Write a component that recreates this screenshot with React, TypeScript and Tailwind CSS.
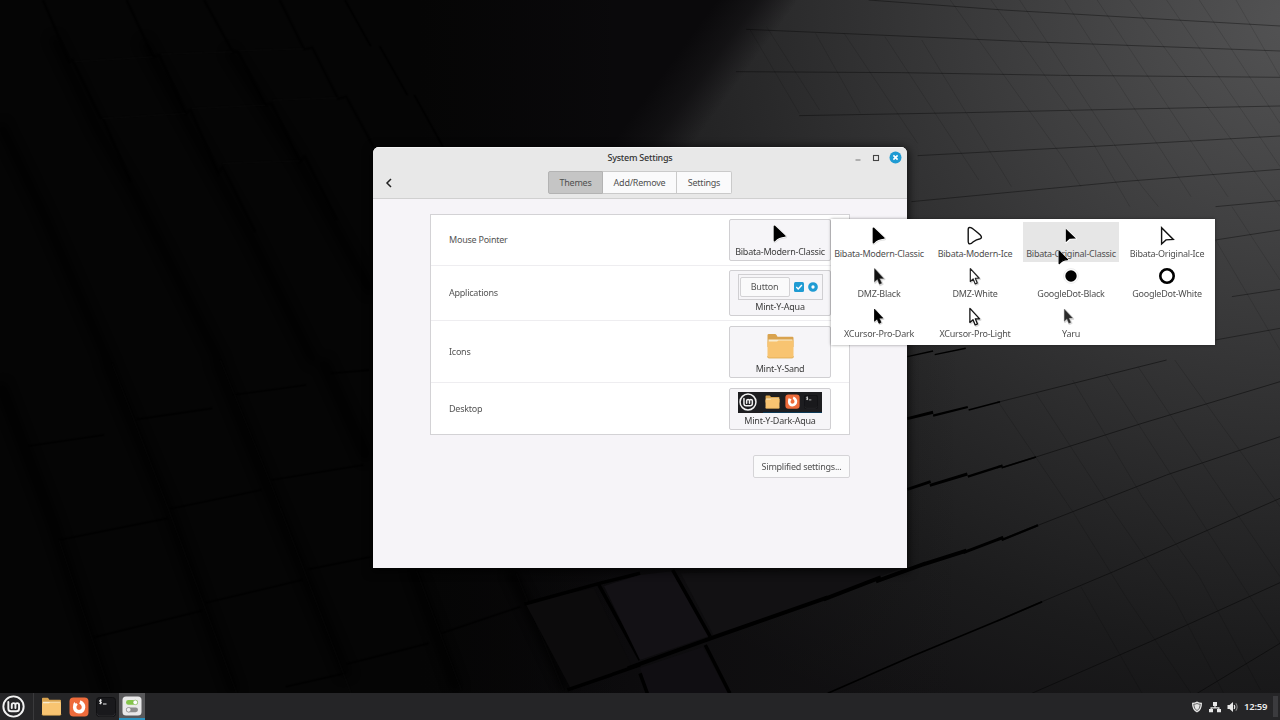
import type { ReactNode } from "react";

const ARROW = "M0 0 V12.2 L2.7 9.8 L4.6 14.4 L6.6 13.5 L4.7 9.1 H8.4 Z";

function MintLogo({ className }: { className: string }) {
  return (
    <svg className={className} viewBox="0 0 24 24" fill="none" stroke="#f2f2f2" strokeLinecap="round">
      <circle cx="12" cy="12" r="10.6" strokeWidth="2" />
      <path d="M6.6 7.2V14a3 3 0 0 0 3 3h5.2a3 3 0 0 0 3-3v-3.6a1.9 1.9 0 0 0-3.8 0v3.1M14 10.400a1.900 1.900 0 0 0-3.800 0v3.100" strokeWidth="2" />
    </svg>
  );
}

function Folder({ className }: { className: string }) {
  return (
    <svg className={className} viewBox="0 0 28 26">
      <path d="M1 2.200Q1 1 2.200 1H8.500Q9.400 1 10 2L11 3.800H25.800Q27 3.800 27 5V14H1Z" fill="#d9a34f" />
      <path d="M2 6.500H26V14H2Z" fill="#f8ecd0" />
      <path d="M1 8.500H10.500L12 7.500H27V23.500Q27 25 25.500 25H2.500Q1 25 1 23.500Z" fill="#f8c471" />
      <path d="M1 23.300Q1 25 2.500 25H25.500Q27 25 27 23.300" stroke="#dda94f" strokeWidth=".8" fill="none" />
    </svg>
  );
}

function Firefox({ className }: { className: string }) {
  return (
    <svg className={className} viewBox="0 0 20 20">
      <rect x=".5" y=".5" width="19" height="19" rx="4" fill="#ee6b3b" />
      <path d="M5.300 5.100 6.500 6.600 7.800 6.300 8.700 7.800 7.500 9.300Q7 12.800 10 12.900 13 12.700 12.700 9.500 12.300 7.300 10.300 6.700L11.400 3.200Q16.600 5.400 16.300 10.400 15.600 16.300 10 16.500 4.400 16.200 3.900 10.500 3.800 7.200 5.300 5.100Z" fill="#fff" />
    </svg>
  );
}

function Terminal({ className }: { className: string }) {
  return (
    <svg className={className} viewBox="0 0 20 20">
      <rect x=".5" y=".5" width="19" height="19" rx="3" fill="#19191c" stroke="#101012" />
      <path d="M1 16.500Q1.500 19 4 19H16Q18.500 19 19 16.500" fill="none" stroke="#303034" strokeWidth=".8" />
      <path d="M5.700 3.200Q3.300 2.700 3.400 4 3.700 5.100 5.500 5.200 5.900 6.900 3.300 6.400M4.600 2.200V7.300M7 7H10.500" fill="none" stroke="#eee" strokeWidth="1" />
    </svg>
  );
}

function SettingsApp({ className }: { className: string }) {
  return (
    <svg className={className} viewBox="0 0 20 20">
      <rect x=".5" y=".5" width="19" height="19" rx="3.500" fill="#e9e9e9" />
      <rect x="4" y="4" width="12" height="4.800" rx="2.400" fill="#84c54a" />
      <circle cx="13.300" cy="6.400" r="2.300" fill="#fff" stroke="#78ad4c" strokeWidth=".5" />
      <rect x="4" y="11.400" width="12" height="4.800" rx="2.400" fill="#8c8c8c" />
      <circle cx="6.600" cy="13.800" r="2.300" fill="#eee" stroke="#777" strokeWidth=".5" />
    </svg>
  );
}

function CursorBox({ children }: { children: ReactNode }) {
  return (
    <svg className="h-6 w-6 shrink-0 overflow-visible" viewBox="0 0 24 24" strokeLinejoin="round">
      {children}
    </svg>
  );
}

function ModernClassic() {
  return (
    <CursorBox>
      <path d="M6.800 4.800V19Q10.700 15 17.300 14.700Z" fill="#bbb" stroke="#bbb" strokeWidth="3.600" opacity=".45" />
      <path d="M6.500 4.300V18.600Q10.500 14.400 16.800 14Z" fill="#000" stroke="#fff" strokeWidth="3" />
      <path d="M6.500 4.300V18.600Q10.500 14.400 16.800 14Z" fill="#000" stroke="#000" strokeWidth="1.700" />
    </CursorBox>
  );
}

function Shadowed({ d, x, y, s, fill, stroke, line = 1.2 }: { d: string; x: number; y: number; s: number; fill: string; stroke: string; line?: number }) {
  return (
    <CursorBox>
      <g transform={`translate(${x} ${y}) scale(${s})`}>
        <path d={d} transform="translate(.7 .8)" fill="#999" stroke="#999" strokeWidth="2" opacity=".35" />
        <path d={d} fill={fill} stroke={stroke} strokeWidth={line} />
      </g>
    </CursorBox>
  );
}

const pointers: { name: string; icon: ReactNode; hover?: boolean }[] = [
  { name: "Bibata-Modern-Classic", icon: <ModernClassic /> },
  {
    name: "Bibata-Modern-Ice",
    icon: (
      <CursorBox>
        <path d="M5.200 5.300Q5.400 2.900 7.800 3.600 10.200 4.600 17.300 11 19.600 13.500 17.300 14.700 13.300 15.300 10.300 17.800 7.300 20.800 5.700 19.400 5 18.700 5.200 16Z" fill="#fff" stroke="#111" strokeWidth="1.400" />
      </CursorBox>
    ),
  },
  {
    name: "Bibata-Original-Classic",
    hover: true,
    icon: (
      <CursorBox>
        <path d="M7 5.300V18.500L10.800 15 17 14.700Z" fill="#000" stroke="#fff" strokeWidth="1.700" />
        <path d="M6.800 4.800V18.200L10.600 14.800 17 14.500Z" fill="#000" />
      </CursorBox>
    ),
  },
  {
    name: "Bibata-Original-Ice",
    icon: (
      <CursorBox>
        <path d="M6.600 3.800V20L11 15.900 18.300 15.400Z" fill="#fff" stroke="#111" strokeWidth="1.400" strokeLinejoin="miter" />
      </CursorBox>
    ),
  },
  { name: "DMZ-Black", icon: <Shadowed d={ARROW} x={7.5} y={4.6} s={1.08} fill="#111" stroke="#333" line={0.4} /> },
  { name: "DMZ-White", icon: <Shadowed d={ARROW} x={7.3} y={4.6} s={1.06} fill="#fff" stroke="#222" line={1.1} /> },
  {
    name: "GoogleDot-Black",
    icon: (
      <CursorBox>
        <circle cx="12" cy="12" r="7.400" fill="#fff" stroke="#eee" />
        <circle cx="12" cy="12" r="5.700" fill="#000" />
      </CursorBox>
    ),
  },
  {
    name: "GoogleDot-White",
    icon: (
      <CursorBox>
        <circle cx="12" cy="12" r="6.700" fill="#fff" stroke="#000" strokeWidth="2.600" />
      </CursorBox>
    ),
  },
  { name: "XCursor-Pro-Dark", icon: <Shadowed d={ARROW} x={7.5} y={5.2} s={0.98} fill="#000" stroke="#000" line={0.8} /> },
  { name: "XCursor-Pro-Light", icon: <Shadowed d={ARROW} x={6.9} y={4.4} s={1.15} fill="#fff" stroke="#111" line={1.1} /> },
  { name: "Yaru", icon: <Shadowed d={ARROW} x={5.3} y={5.2} s={0.98} fill="#2b2b2b" stroke="#555" line={0.4} /> },
];

function Caption({ children }: { children: ReactNode }) {
  return <span className="whitespace-nowrap leading-3">{children}</span>;
}

function Row({ label, height, button, children, name }: { label: string; height: string; button: string; children: ReactNode; name: string }) {
  return (
    <div className={`flex items-center justify-between pl-[18px] pr-[18px] ${height}`}>
      <span className="text-[#555]">{label}</span>
      <div className={`flex w-[102px] flex-col items-center rounded-[2px] border border-[#d0cfd2] bg-[#f6f5f8] text-[#3c3c3c] ${button}`}>
        {children}
        <Caption>{name}</Caption>
      </div>
    </div>
  );
}

function Lines({ d, color = "#000", width = 1, opacity = 1 }: { d: string; color?: string; width?: number; opacity?: number }) {
  return <path d={d} fill="none" stroke={color} strokeWidth={width} opacity={opacity} vectorEffect="non-scaling-stroke" />;
}

function Wallpaper() {
  return (
    <svg className="absolute inset-0 h-full w-full" viewBox="0 0 1280 720">
      <defs>
        <radialGradient id="light" gradientUnits="userSpaceOnUse" cx="1300" cy="20" r="900" gradientTransform="translate(1300 20) scale(1 .88) translate(-1300 -20)">
          <stop offset="0" stopColor="#535354" />
          <stop offset=".15" stopColor="#49494a" />
          <stop offset=".35" stopColor="#3b3b3c" />
          <stop offset=".6" stopColor="#29292a" />
          <stop offset=".8" stopColor="#1b1b1c" />
          <stop offset="1" stopColor="#111012" />
        </radialGradient>
        <linearGradient id="dark" gradientUnits="userSpaceOnUse" x1="728" y1="-15" x2="781" y2="24">
          <stop offset="0" stopColor="#0a090b" />
          <stop offset=".5" stopColor="#0c0b0d" stopOpacity=".72" />
          <stop offset="1" stopColor="#0c0a0d" stopOpacity="0" />
        </linearGradient>
        <linearGradient id="floor" x1="380" y1="0" x2="960" y2="0" gradientUnits="userSpaceOnUse">
          <stop offset="0" stopColor="#050505" />
          <stop offset=".4" stopColor="#0a090b" stopOpacity=".8" />
          <stop offset="1" stopColor="#111" stopOpacity="0" />
        </linearGradient>
        <linearGradient id="left" x1="420" y1="0" x2="620" y2="0" gradientUnits="userSpaceOnUse">
          <stop offset="0" stopColor="#050505" />
          <stop offset="1" stopColor="#050505" stopOpacity="0" />
        </linearGradient>
        <filter id="soft" x="-10%" y="-10%" width="120%" height="120%">
          <feGaussianBlur stdDeviation="5" />
        </filter>
      </defs>
      <rect width="1280" height="720" fill="url(#light)" />
      <path d="M0 0H900V300H0Z" fill="url(#dark)" />
      <path d="M0 300H960V720H0Z" fill="url(#floor)" />
      <path d="M0 0H640V720H0Z" fill="url(#left)" />

      <g filter="url(#soft)" opacity=".75">
        <g transform="scale(.4082 .3333)">
          <Lines width={9} d="M0 370 L110 650 L270 1100 M130 110 L240 390 L330 580 L540 1090 M350 120 L460 370 L610 700 L770 1090 M560 150 L730 480 L910 880" />
        </g>
        <g transform="translate(0 360) scale(.4082 .3333)">
          <Lines width={11} d="M0 70 L130 490 L265 1000 M260 0 L410 440 L575 1000 M530 0 L650 360 L850 950 M790 0 L900 300 M1010 620 L1120 990 M1250 630 L1390 990" />
        </g>
      </g>

      <g transform="scale(.4082 .3333)">
        <Lines width={2.5} opacity={0.65} d="M105 0 L170 185 L178 180 L245 350 L252 355 L320 545 M310 0 L375 170 L390 165 L455 340 L467 330 L535 520 L545 500 L625 695 M500 0 L570 155 L583 155 L650 315 L665 310 L735 485 L747 470 L825 660 M685 0 L745 148 L765 143 L828 296 L848 290 L915 440" />
        <Lines width={1.6} d="M845 0 L908 138 M930 138 L998 285 M1015 285 L1085 440" />
        <Lines color="#111" opacity={0.4} d="M180 185 L375 170 M395 162 L570 155 M583 152 L745 146 M250 355 L455 340 M470 325 L650 315 M668 300 L828 293 M545 490 L735 482" />
      </g>

      <g transform="translate(0 360) scale(.4082 .3333)">
        <Lines width={1.600} opacity={0.85} d="M70 258 L255 225 M335 178 L520 145 M570 105 L750 75 M810 40 L905 30 M145 540 L410 475 M415 447 L640 390 M665 360 L890 315 M230 832 L495 752 M505 728 L740 660 M755 628 L910 590 M700 980 L845 940 M850 912 L1050 850 M1080 820 L1275 740" />
        <Lines color="#131313" opacity={0.35} d="M145 540 L270 1000 M275 10 L415 455 L580 1000 M540 0 L665 375 L860 1000 M1020 630 L1130 990 M1265 640 L1380 990" />
        <path d="M1285 725 L1455 685 L1550 925 L1400 990 Z" fill="#0c0b0c" />
        <Lines width={3.500} d="M1465 670 L1568 900 M1285 732 L1475 668 L1568 640 M1390 990 L1568 915" />
      </g>

      <path d="M604 586 L640 575 L673 571 L709 636 L640 660Z" fill="#131115" />
      <path d="M640 668 L703 647 L728 693 H648Z" fill="#100e12" />
      <g transform="translate(640 360) scale(.4082 .3333)">
        <path d="M100 640 L640 625 L460 712 L180 825Z" fill="#121113" />
        <Lines width={3.500} d="M80 630 L172 830 M160 855 L220 1000 M0 940 L18 1000" />
        <Lines width={4} d="M-30 925 L0 912 L180 832 L460 712" />
        <Lines width={4} d="M450 718 L590 652 M578 664 L700 610 M692 614 L800 572" />
        <Lines width={3} d="M792 578 L890 532 M655 388 L712 365 M710 376 L802 342 M655 176 L718 157" />
        <Lines width={2.2} d="M886 540 L975 496 M803 350 L888 317 M718 167 L803 141" />
        <Lines width={1.600} d="M886 323 L970 291 M805 150 L882 125 M460 1000 L668 888 L885 778 L985 725" />
        <Lines opacity={0.4} d="M882 125 L1290 0 M970 291 L1230 190 L1568 65 M975 496 L1290 345 L1568 230 M985 725 L1160 635 L1568 415 M960 1000 L1250 845 L1568 668 M1365 1000 L1568 850" />
        <Lines opacity={0.14} d="M880 130 L1060 455 L1190 710 L1350 1000 M970 100 L1140 420 L1310 720 L1430 1000 M1060 60 L1230 410 L1370 650 L1520 990 M1140 40 L1320 380 L1568 850 M1220 20 L1400 350 L1568 650 M1310 0 L1568 440 M1080 680 L1230 1000" />
      </g>

      <g transform="translate(640 0) scale(.4082 .3333)">
        <Lines opacity={0.36} d="M560 0 L890 30 L1568 78 M260 88 L620 107 L950 125 L1568 153 M235 215 L640 218 L1030 226 L1568 232 M390 347 L800 338 L1090 330 L1568 318 M680 467 L1160 436 L1568 408 M665 605 L1180 545 L1568 508 M1410 620 L1568 602 M1410 720 L1568 690 M1450 890 L1568 868 M1410 1020 L1568 985" />
        <Lines opacity={0.12} d="M270 90 L390 340 M310 80 L440 330 M430 100 L540 340 M500 100 L680 430 M600 110 L830 540 M690 120 L910 560 M760 0 L1040 480 L1080 560 M860 0 L1110 430 L1200 620 M930 0 L1230 560 L1270 620 M1040 0 L1350 590 M1120 0 L1440 590 M1200 0 L1568 620 M1290 0 L1568 500 M1370 0 L1568 370 M1460 0 L1568 230 M1410 720 L1568 1050 M1450 620 L1568 840" />
        <Lines width={1.500} d="M655 1070 L718 1053 M722 1064 L798 1045" />
      </g>
    </svg>
  );
}

export default function App() {
  return (
    <div className="relative flex h-[720px] w-[1280px] flex-col justify-end overflow-hidden bg-[#050505] font-['Noto_Sans','Open_Sans',sans-serif] text-[9px] tracking-[-0.24px]">
      <Wallpaper />

      <section className="absolute left-[373px] top-[147px] flex h-[421px] w-[534px] flex-col overflow-hidden rounded-t-[6px] bg-[#f6f4f8] shadow-[0_2px_9px_2px_rgba(0,0,0,0.65)]">
        <header className="flex h-[52px] flex-col border-b border-[#d0d0d0] bg-[#e8e8e8] shadow-[inset_0_1px_0_#f5f5f5]">
          <div className="grid h-[21px] grid-cols-3 items-center">
            <span />
            <h1 className="text-center font-medium text-[#333]">System Settings</h1>
            <div className="flex items-center justify-end gap-[8px] pr-[5px]">
              <svg className="h-[10px] w-[10px]" viewBox="0 0 10 10"><path d="M2.500 7H7.500" stroke="#777" strokeWidth="1.100" /></svg>
              <svg className="h-[10px] w-[10px]" viewBox="0 0 10 10"><rect x="2.500" y="2.500" width="5" height="5" fill="none" stroke="#444" strokeWidth="1.100" /></svg>
              <svg className="h-[13px] w-[13px]" viewBox="0 0 13 13"><circle cx="6.500" cy="6.500" r="6" fill="#1f9bd3" /><path d="M4.400 4.400 8.600 8.600M8.600 4.400 4.400 8.600" stroke="#fff" strokeWidth="1.600" /></svg>
            </div>
          </div>
          <div className="grid h-[29px] grid-cols-[175px_1fr_175px] items-center">
            <svg className="ml-[11px] h-[12px] w-[10px]" viewBox="0 0 10 12"><path d="M7 2 3 6 7 10" fill="none" stroke="#222" strokeWidth="1.500" /></svg>
            <nav className="flex h-[23px] text-[#505050]">
              <button className="w-[55px] rounded-l-[2px] border border-[#b3b3b3] bg-[#c5c5c5]">Themes</button>
              <button className="w-[74px] border-y border-r border-[#cacaca] bg-[#fafafb]">Add/Remove</button>
              <button className="w-[55px] rounded-r-[2px] border-y border-r border-[#cacaca] bg-[#fafafb]">Settings</button>
            </nav>
          </div>
        </header>

        <div className="ml-[57px] mt-[15px] flex w-[420px] flex-col divide-y divide-[#eeedf0] border border-[#d3d2d5] bg-white">
          <Row label="Mouse Pointer" height="h-[51px]" button="h-[42px]" name="Bibata-Modern-Classic">
            <div className="mt-[2px]"><ModernClassic /></div>
          </Row>
          <Row label="Applications" height="h-[55px]" button="h-[46px]" name="Mint-Y-Aqua">
            <div className="mt-[3px] mb-px flex h-[26px] w-[85px] shrink-0 items-center justify-between border border-[#d0cfd2] pl-px pr-[4px]">
              <span className="flex h-[20px] w-[50px] items-center justify-center rounded-[2px] border border-[#d3d2d5] bg-[#fafafb] text-[#555]">Button</span>
              <svg className="h-[10px] w-[10px]" viewBox="0 0 10 10"><rect width="10" height="10" rx="1.500" fill="#1f9bd3" /><path d="M2.300 5.100 4.200 7 7.900 3" fill="none" stroke="#fff" strokeWidth="1.400" /></svg>
              <svg className="h-[10px] w-[10px]" viewBox="0 0 10 10"><circle cx="5" cy="5" r="3.250" fill="#fff" stroke="#1f9bd3" strokeWidth="3.200" /></svg>
            </div>
          </Row>
          <Row label="Icons" height="h-[62px]" button="h-[52px]" name="Mint-Y-Sand">
            <Folder className="mt-[6px] mb-[4px] h-[26px] w-[29px] shrink-0" />
          </Row>
          <Row label="Desktop" height="h-[51px]" button="h-[42px]" name="Mint-Y-Dark-Aqua">
            <div className="mt-[3px] mb-[2px] flex h-[21px] w-[84px] shrink-0 items-center bg-[#1d1d20] pl-px">
              <MintLogo className="h-[18px] w-[18px]" />
              <div className="ml-[6px] flex h-full flex-1 items-center justify-between border-b border-[#0b3a58] pl-[2px] pr-[4px]">
                <Folder className="h-[14px] w-[15px]" />
                <Firefox className="h-[15px] w-[15px]" />
                <Terminal className="h-[14px] w-[14px]" />
              </div>
            </div>
          </Row>
        </div>

        <button className="mr-[57px] mt-[20px] h-[23px] w-[97px] self-end rounded-[2px] border border-[#d5d4d7] bg-[#fafafb] text-[#505050]">Simplified settings...</button>
      </section>

      <section className="absolute left-[831px] top-[219px] grid h-[126px] w-[384px] grid-cols-4 content-start bg-white py-[3px] text-[#505050] shadow-[0_0_3px_rgba(0,0,0,0.4)]">
        {pointers.map((p) => (
          <div key={p.name} className={`flex h-10 flex-col items-center pt-[2px] ${p.hover ? "bg-[#e6e6e6]" : "bg-white"}`}>
            {p.icon}
            <Caption>{p.name}</Caption>
          </div>
        ))}
      </section>

      <svg className="absolute left-[1056px] top-[248px] h-[20px] w-[16px]" viewBox="0 0 16 20" strokeLinejoin="round">
        <path d="M3.200 3.500V15.600Q6.200 11.800 11.500 11.600Z" stroke="#fff" strokeWidth="2.200" opacity=".7" />
        <path d="M3.200 3.500V15.600Q6.200 11.800 11.500 11.600Z" stroke="#000" strokeWidth="1.300" />
      </svg>

      <footer className="relative flex h-[27px] items-center justify-between bg-[#252527]">
        <div className="flex h-full items-center">
          <MintLogo className="ml-[2px] h-[23px] w-[23px]" />
          <span className="ml-[8px] h-full w-px bg-[#3a3a3c]" />
          <span className="ml-[4px] flex h-full w-[27px] items-center justify-center"><Folder className="h-[19px] w-[21px]" /></span>
          <span className="flex h-full w-[27px] items-center justify-center"><Firefox className="h-[20px] w-[20px]" /></span>
          <span className="flex h-full w-[27px] items-center justify-center"><Terminal className="h-[20px] w-[20px]" /></span>
          <span className="flex h-full w-[26px] items-center justify-center border-b-2 border-[#2a93c0] bg-[#58585a]"><SettingsApp className="h-[20px] w-[20px]" /></span>
        </div>
        <div className="flex h-full items-center">
          <svg className="h-3 w-3" viewBox="0 0 12 12"><path d="M6 .5Q8.500 1.800 11 1.700 11.200 9 6 11.600 .8 9 1 1.700 3.500 1.800 6 .5Z" fill="#e4e4e4" /><path d="M6 2.500Q7.700 3.300 9.300 3.300 9.200 7.800 6 9.700 2.800 7.800 2.700 3.300 4.300 3.300 6 2.500Z" fill="none" stroke="#444" strokeWidth=".8" /></svg>
          <svg className="ml-[6px] h-3 w-3" viewBox="0 0 12 12" fill="#e8e8e8"><path d="M4 1H8V5H6.600V6.300H10.500V8H12V11.300H8V8H9.300V7.400H2.700V8H4V11.300H0V8H1.500V6.300H5.400V5H4Z" /></svg>
          <svg className="ml-[6px] h-3 w-3" viewBox="0 0 12 12"><path d="M.5 4H2.500L6 1V11L2.500 8H.5Z" fill="#e8e8e8" /><path d="M7.200 4Q8.300 6 7.200 8" fill="none" stroke="#e8e8e8" strokeWidth="1.300" /><path d="M8.800 2.200Q11.500 6 8.800 9.800" fill="none" stroke="#888" strokeWidth="1.100" /></svg>
          <span className="ml-[5px] w-[24px] pt-px text-[9.500px] font-semibold text-[#ececec]">12:59</span>
          <span className="ml-[5px] mr-[2px] h-[21px] w-[5px] bg-[#3b3b3e]" />
        </div>
      </footer>
    </div>
  );
}
